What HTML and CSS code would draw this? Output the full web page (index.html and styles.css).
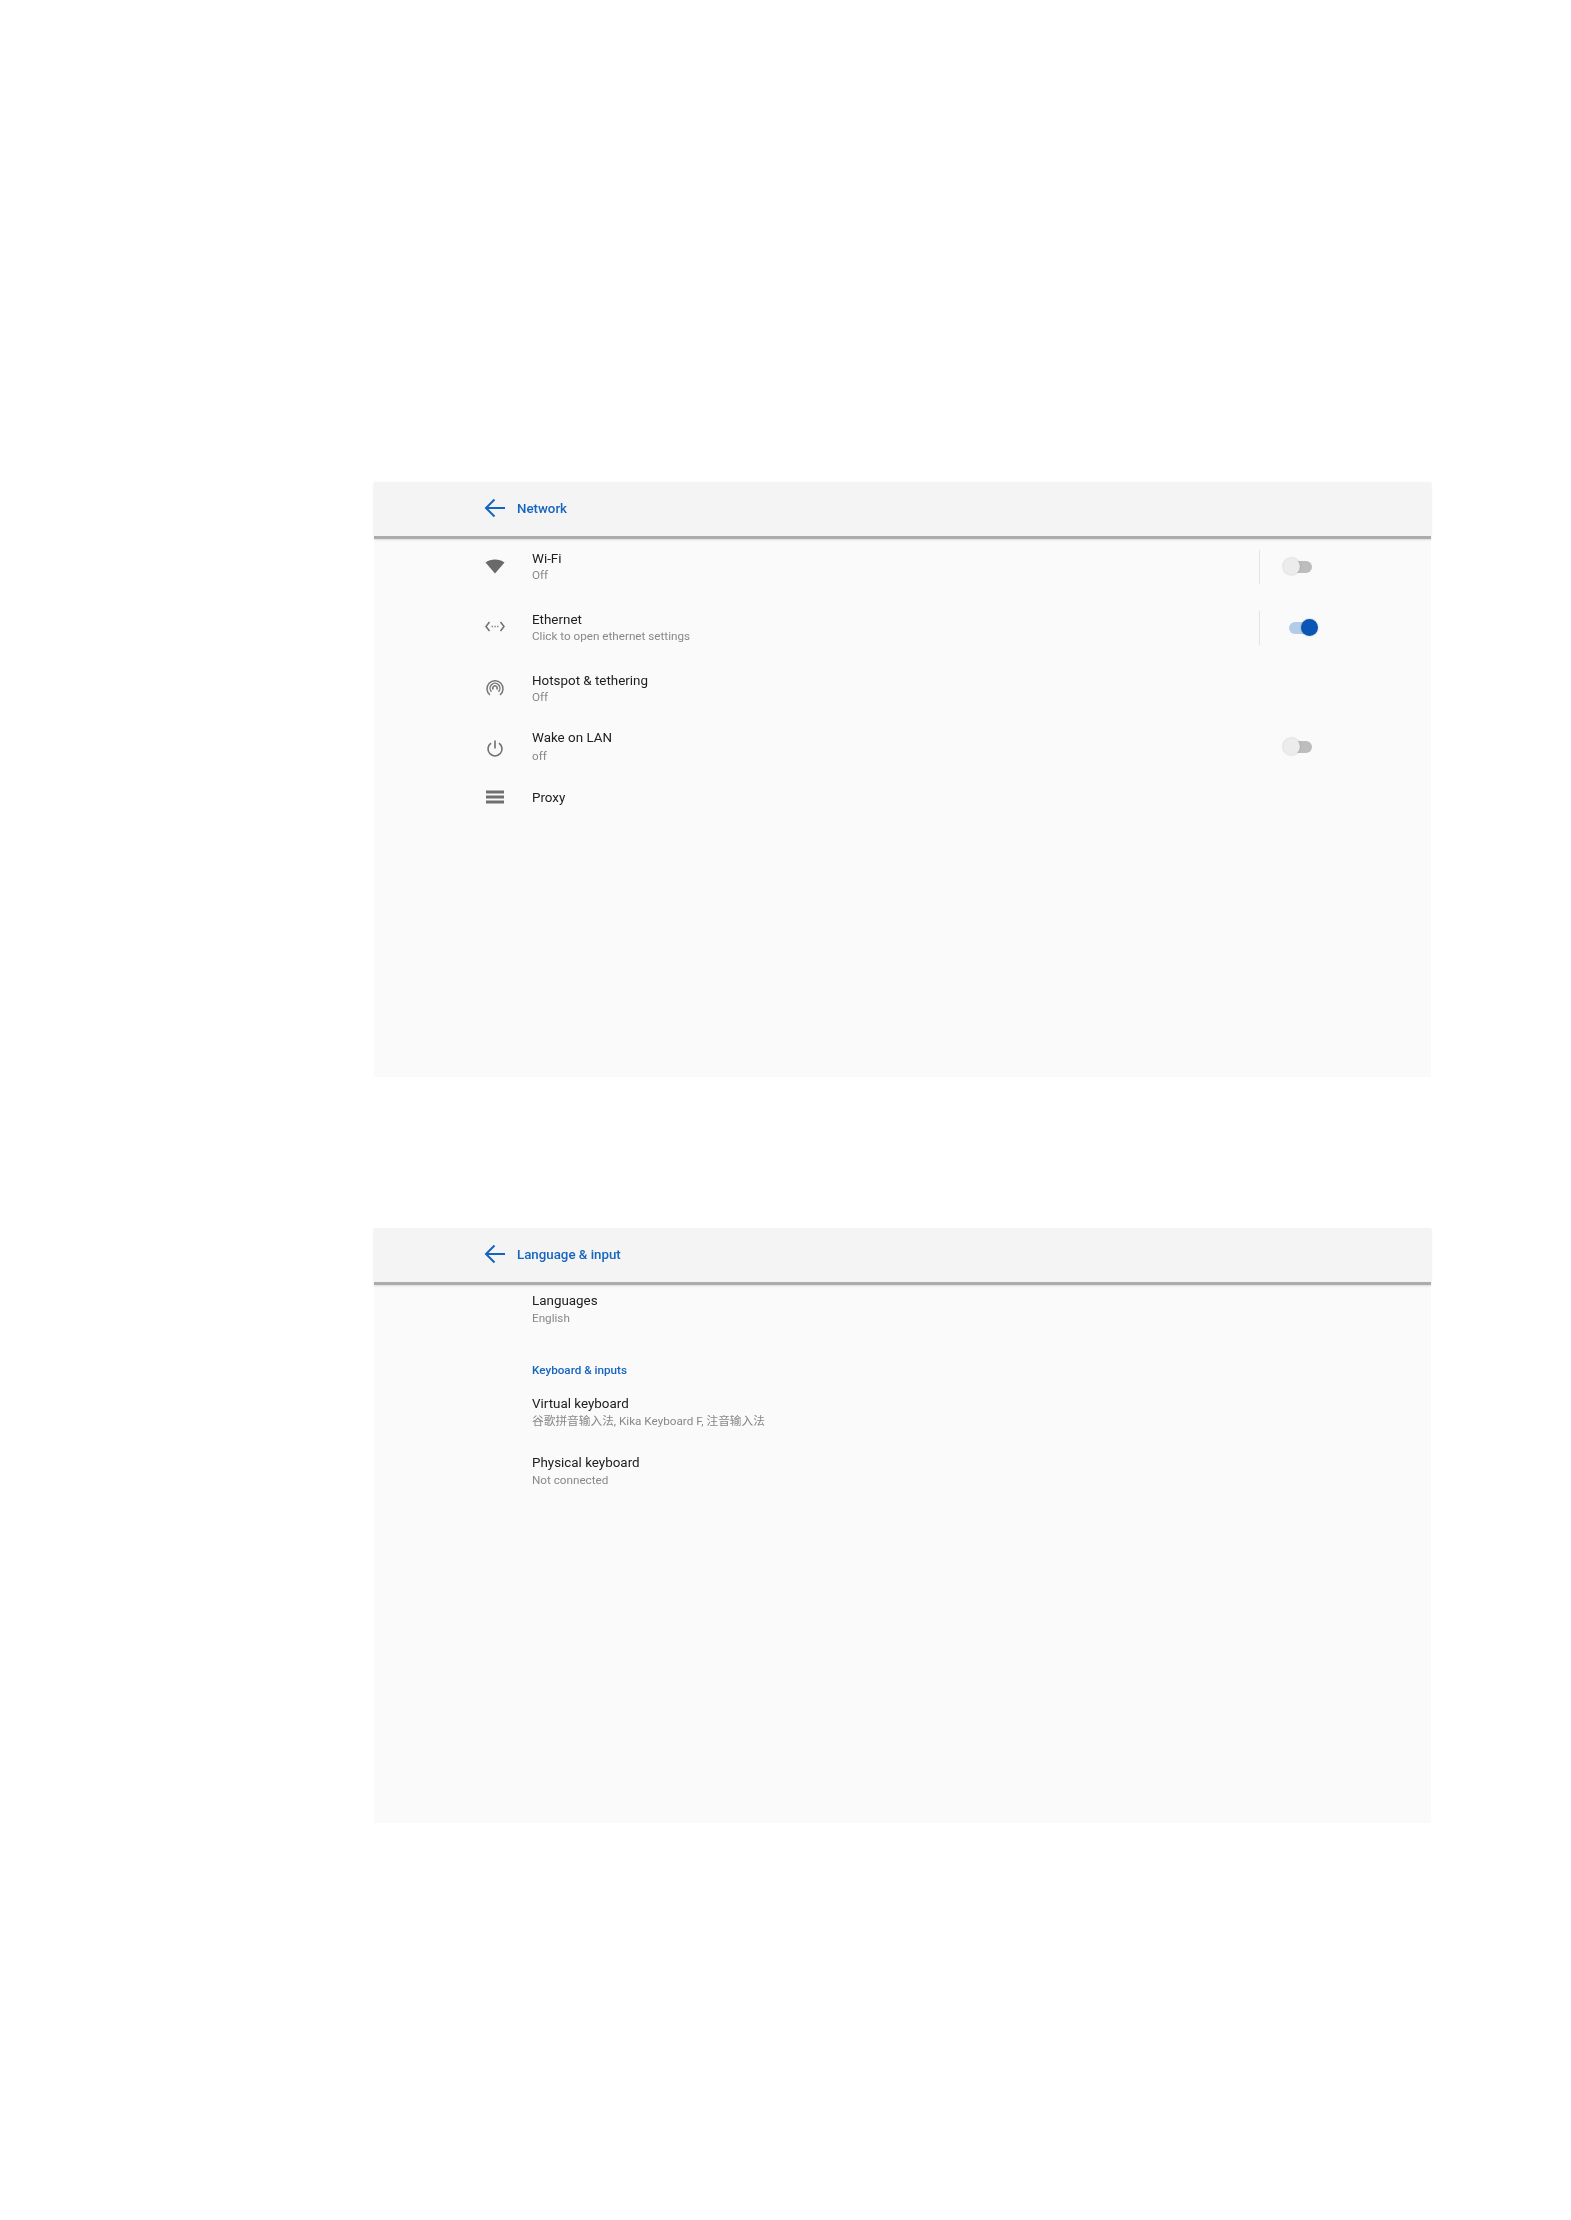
FILE: index.html
```html
<!DOCTYPE html>
<html lang="en">
<head>
<meta charset="utf-8">
<title>Settings</title>
<link rel="stylesheet" href="styles.css">
</head>
<body>
<main class="page">
  <section class="panel">
    <header class="bar">
      <svg class="back" viewBox="0 0 22 22"><path d="M21 11H2.500M10.500 2.500 2 11l8.500 8.500" fill="none" stroke="#1565c0" stroke-width="2"/></svg>
      <h1 class="bar-title">Network</h1>
    </header>
    <div class="list">
      <div class="row">
        <svg class="icon" viewBox="0 0 20 20"><path d="M0.500 5.500C3 3.600 6.300 2.500 10 2.500s7 1.100 9.500 3L10 16.500z" fill="#6a6a6a"/></svg>
        <div class="text"><div class="title">Wi-Fi</div><div class="sub">Off</div></div>
        <span class="divider"></span>
        <span class="toggle"><span class="track"></span><span class="thumb"></span></span>
      </div>
      <div class="row">
        <svg class="icon" viewBox="0 0 20 20"><path d="M4.500 4 1 8.500 4.500 13M15.500 4 19 8.500 15.500 13" fill="none" stroke="#6f6f6f" stroke-width="1.500"/><path d="M6.500 8.500h7" fill="none" stroke="#8a8a8a" stroke-width="1.300" stroke-dasharray="1.500 1.300"/></svg>
        <div class="text"><div class="title">Ethernet</div><div class="sub">Click to open ethernet settings</div></div>
        <span class="divider"></span>
        <span class="toggle on"><span class="track"></span><span class="thumb"></span></span>
      </div>
      <div class="row">
        <svg class="icon" viewBox="0 0 20 20"><g fill="none" stroke="#777" stroke-width="1.500"><path d="M5 16a8 8 0 1 1 10 0"/><path d="M6.500 12.700a4.900 4.900 0 1 1 7 0"/><path d="M8.300 10.500a2.200 2.200 0 1 1 3.400 0"/></g></svg>
        <div class="text"><div class="title">Hotspot &amp; tethering</div><div class="sub">Off</div></div>
      </div>
      <div class="row wake">
        <svg class="icon" viewBox="0 0 20 20"><g fill="none" stroke="#707070" stroke-width="1.600"><path d="M10 3.500v8"/><path d="M6 6.200a7 7 0 1 0 8 0"/></g></svg>
        <div class="text"><div class="title">Wake on LAN</div><div class="sub">off</div></div>
        <span class="toggle"><span class="track"></span><span class="thumb"></span></span>
      </div>
      <div class="row single">
        <svg class="icon" viewBox="0 0 20 20"><path d="M1 3.500h18v3H1zM1 8.500h18v3H1zM1 13.500h18v3H1z" fill="#6f6f6f"/></svg>
        <div class="text"><div class="title">Proxy</div></div>
      </div>
    </div>
  </section>

  <section class="panel">
    <header class="bar">
      <svg class="back" viewBox="0 0 22 22"><path d="M21 11H2.500M10.500 2.500 2 11l8.500 8.500" fill="none" stroke="#1565c0" stroke-width="2"/></svg>
      <h1 class="bar-title">Language &amp; input</h1>
    </header>
    <div class="list lang">
      <div class="entry"><div class="title">Languages</div><div class="sub">English</div></div>
      <div class="category">Keyboard &amp; inputs</div>
      <div class="entry"><div class="title">Virtual keyboard</div><div class="sub">谷歌拼音输入法, Kika Keyboard F, 注音输入法</div></div>
      <div class="entry"><div class="title">Physical keyboard</div><div class="sub">Not connected</div></div>
    </div>
  </section>
</main>
</body>
</html>
```

FILE: styles.css
```css
html, body {
  margin: 0;
  background: #fff;
}
body {
  font-family: Roboto, "Noto Sans CJK SC", sans-serif;
}
.page {
  display: flex;
  flex-direction: column;
  gap: 151px;
  width: 1057px;
  margin-left: 374px;
  padding-top: 482px;
}
.panel {
  height: 595px;
  background: #fafafa;
  filter: blur(0.55px);
}
.bar {
  box-sizing: border-box;
  height: 57px;
  display: flex;
  align-items: center;
  gap: 11px;
  padding: 0 0 2px 110px;
  background: #f4f4f4;
  border-bottom: 3px solid #ababab;
  box-shadow: 0 1px 2px rgba(0, 0, 0, 0.12);
}
.back {
  width: 22px;
  height: 22px;
  flex: none;
}
.bar-title {
  margin: 0;
  font-size: 13.3px;
  font-weight: 500;
  color: #1565c0;
  line-height: 17px;
}
.list {
  display: flex;
  flex-direction: column;
  gap: 6px;
}
.row {
  height: 55px;
  display: flex;
  align-items: center;
  padding-left: 111px;
}
.row.wake {
  margin-top: -3px;
}
.row.wake .sub {
  margin-top: 2px;
}
.row.single {
  height: 34px;
}
.icon {
  width: 20px;
  height: 20px;
  flex: none;
  margin-right: 27px;
}
.text {
  flex: 1;
  min-width: 0;
}
.title {
  font-size: 13.4px;
  line-height: 17px;
  color: #202020;
}
.sub {
  font-size: 11.7px;
  line-height: 17px;
  color: #888;
}
.divider {
  width: 1px;
  height: 34px;
  background: #e4e4e4;
}
.toggle {
  position: relative;
  width: 35px;
  height: 18px;
  margin: 0 113px 0 23px;
  flex: none;
}
.track {
  position: absolute;
  left: 6px;
  width: 23px;
  top: 3px;
  height: 12px;
  border-radius: 6px;
  background: #bdbdbd;
}
.thumb {
  position: absolute;
  left: 0;
  top: 0;
  width: 17px;
  height: 17px;
  border-radius: 50%;
  background: #ececec;
  box-shadow: 0 0 2px rgba(0, 0, 0, 0.25);
}
.toggle.on .track {
  background: #b3cde9;
}
.toggle.on .thumb {
  left: 18px;
  background: #0a55b5;
}
.lang {
  display: block;
  padding: 7px 0 0 158px;
}
.lang .sub {
  margin-top: 1px;
}
.entry {
  margin-bottom: 24px;
}
.category {
  margin: 35px 0 16px;
  font-size: 11.7px;
  font-weight: 500;
  line-height: 17px;
  color: #1565c0;
}
```
